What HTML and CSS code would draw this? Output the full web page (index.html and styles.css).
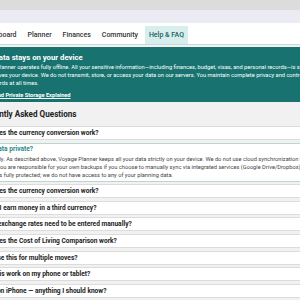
FILE: index.html
```html
<!DOCTYPE html>
<html lang="en">
<head>
    <meta charset="UTF-8">
    <meta name="viewport" content="width=device-width, initial-scale=1.0">
    <title>Voyage Planner - Help &amp; FAQ</title>
    <link rel="stylesheet" href="styles.css">
</head>
<body>
    <div class="top-strip"></div>
    <div class="sub-strip"></div>

    <div class="page">
        <nav class="main-nav">
            <a class="nav-item">Dashboard</a>
            <a class="nav-item">Planner</a>
            <a class="nav-item">Finances</a>
            <a class="nav-item">Community</a>
            <a class="nav-item active">Help &amp; FAQ</a>
        </nav>

        <div class="privacy-banner">
            <h2>Your data stays on your device</h2>
            <p>Voyage Planner operates fully offline. All your sensitive information&mdash;including finances, budget, visas, and personal records&mdash;is stored locally and<br>
            never leaves your device. We do not transmit, store, or access your data on our servers. You maintain complete privacy and control over<br>
            your records at all times.</p>
            <a class="banner-link">Offline and Private Storage Explained</a>
        </div>

        <div class="faq">
            <h3>Frequently Asked Questions</h3>

            <div class="faq-item">How does the currency conversion work?</div>

            <div class="faq-item open">
                <div class="faq-title">Is my data private?</div>
                <p>Absolutely. As described above, Voyage Planner keeps all your data strictly on your device. We do not use cloud synchronization by<br>
                default; you are responsible for your own backups if you choose to manually sync via integrated services (Google Drive/Dropbox).<br>
                It remains fully protected; we do not have access to any of your planning data.</p>
            </div>

            <div class="faq-item">How does the currency conversion work?</div>
            <div class="faq-item">What if I earn money in a third currency?</div>
            <div class="faq-item">Do the exchange rates need to be entered manually?</div>
            <div class="faq-item">How does the Cost of Living Comparison work?</div>
            <div class="faq-item">Can I use this for multiple moves?</div>
            <div class="faq-item">Does this work on my phone or tablet?</div>
            <div class="faq-item">Install on iPhone &mdash; anything I should know?</div>
        </div>
    </div>
</body>
</html>
```

FILE: styles.css
```css
body {
    margin: 0;
    padding: 0;
    background-color: #f1f1f1;
    font-family: Roboto, sans-serif;
    color: #222;
    overflow: hidden;
}

.top-strip {
    height: 10px;
    background-color: #dcdcdc;
}

.sub-strip {
    height: 13px;
    background-color: #ebebf4;
}

.page {
    margin-left: -40px;
    width: 460px;
}

.main-nav {
    display: flex;
    align-items: flex-end;
    height: 21px;
    padding-left: 17.2px;
    background-color: #fff;
    border-bottom: 1px solid #cfd6d6;
}

.nav-item {
    display: block;
    margin: 0 1.5px;
    padding: 0 4px;
    height: 18px;
    line-height: 18px;
    font-size: 7px;
    font-weight: 500;
    color: #333;
}

.nav-item.active {
    background-color: #d6eeec;
    color: #24615e;
}

.privacy-banner {
    margin-top: 2px;
    padding: 6px 10px 3px 16.4px;
    background-color: #187370;
    color: #fff;
}

.privacy-banner h2 {
    margin: 0;
    font-size: 7.75px;
    line-height: 10px;
    font-weight: bold;
}

.privacy-banner p {
    margin: 0 0 4px;
    font-size: 5.7px;
    line-height: 8px;
}

.banner-link {
    display: block;
    font-size: 5.65px;
    line-height: 8px;
    font-weight: bold;
    text-decoration: underline;
}

.faq {
    padding: 6.5px 0 0 14px;
}

.faq h3 {
    margin: 0 0 6.5px;
    font-size: 8.15px;
    line-height: 11px;
    font-weight: bold;
}

.faq-item {
    margin-bottom: 2.6px;
    padding: 0 2px;
    height: 12px;
    line-height: 12px;
    background-color: #fff;
    border: 1px solid #dcdcdc;
    font-size: 6.6px;
    font-weight: bold;
}

.faq-item.open {
    height: auto;
    border-color: #b9d6d4;
    padding-bottom: 2px;
}

.faq-title {
    line-height: 11px;
    color: #2b8a85;
}

.faq-item.open p {
    margin: 0;
    font-size: 5.7px;
    font-weight: normal;
    line-height: 8px;
    color: #444;
}
```
